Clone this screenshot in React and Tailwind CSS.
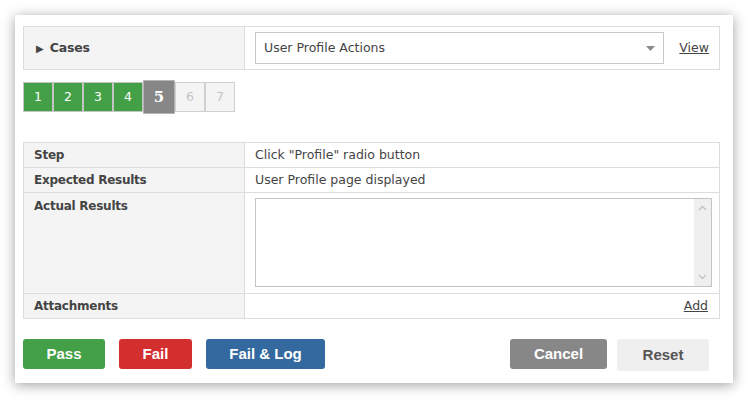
import { useState } from "react";

const steps = [1, 2, 3, 4, 5, 6, 7];

function StepBox({ n, current, done }) {
  if (n === current) {
    return (
      <div className="flex h-[34px] w-[32px] items-center justify-center border border-[#b5b5b5] bg-[#878787] font-['DejaVu_Serif',serif] text-[15px] font-bold text-white">
        {n}
      </div>
    );
  }
  if (done) {
    return (
      <div className="flex h-[30px] w-[30px] items-center justify-center border border-[#c4c4c4] bg-[#43a047] text-[12.5px] text-white">
        {n}
      </div>
    );
  }
  return (
    <div className="flex h-[30px] w-[30px] items-center justify-center border border-[#d0d0d0] bg-[#f4f4f4] text-[12.5px] text-[#c4c4c4]">
      {n}
    </div>
  );
}

export default function App() {
  const [current] = useState(5);
  const [actual, setActual] = useState("");

  return (
    <div className="min-h-screen bg-white p-[15px] font-['DejaVu_Sans',sans-serif] text-[12.5px] text-[#444]">
      {/* card */}
      <div className="h-[368px] w-[718px] bg-white pl-[8px] pt-[11px] shadow-[0_2px_12px_rgba(0,0,0,0.38)]">
        {/* cases row */}
        <div className="grid w-[697px] grid-cols-[221px_1fr] border border-[#ddd]">
          <div className="flex h-[42px] items-center gap-[6px] border-r border-[#ddd] bg-[#f4f4f4] pl-[12px] font-bold">
            <span className="text-[10px]">▶</span>
            <span className="text-[12.5px] tracking-[-0.2px]">Cases</span>
          </div>
          <div className="flex items-center pl-[10px] pr-[10px]">
            <div className="flex h-[32px] w-[409px] items-center justify-between border border-[#c8c8c8] bg-white pl-[8px] pr-[8px]">
              <span>User Profile Actions</span>
              <svg width="9" height="5" viewBox="0 0 9 5">
                <path d="M0 0 L9 0 L4.5 5 Z" fill="#8a8a8a" />
              </svg>
            </div>
            <a href="#" className="ml-auto text-[#444] underline">
              View
            </a>
          </div>
        </div>

        {/* step pager */}
        <div className="mt-[10px] flex h-[34px] items-center">
          {steps.map((n) => (
            <StepBox key={n} n={n} current={current} done={n < current} />
          ))}
        </div>

        {/* step details */}
        <div className="mt-[28px] grid w-[697px] grid-cols-[221px_1fr] border border-[#ddd]">
          <div className="flex h-[25px] items-center border-b border-r border-[#ddd] bg-[#f4f4f4] pl-[10px] text-[12px] font-bold tracking-[-0.25px]">
            Step
          </div>
          <div className="flex items-center border-b border-[#ddd] pl-[10px]">
            Click "Profile" radio button
          </div>

          <div className="flex h-[25px] items-center border-b border-r border-[#ddd] bg-[#f4f4f4] pl-[10px] text-[12px] font-bold tracking-[-0.25px]">
            Expected Results
          </div>
          <div className="flex items-center border-b border-[#ddd] pl-[10px]">
            User Profile page displayed
          </div>

          <div className="h-[101px] border-b border-r border-[#ddd] bg-[#f4f4f4] pl-[10px] pt-[4px] text-[12px] font-bold tracking-[-0.25px]">
            Actual Results
          </div>
          <div className="border-b border-[#ddd] pl-[10px] pt-[5px]">
            <div className="flex h-[89px] w-[457px] border border-[#c4c4c4] bg-white">
              <textarea
                value={actual}
                onChange={(e) => setActual(e.target.value)}
                className="h-full flex-1 resize-none p-[4px] outline-none"
              />
              <div className="flex w-[17px] flex-col items-center justify-between bg-[#efefef] py-[6px]">
                <svg width="9" height="6" viewBox="0 0 9 6">
                  <path d="M1 5 L4.5 1.5 L8 5" stroke="#c2c2c2" strokeWidth="1.3" fill="none" />
                </svg>
                <svg width="9" height="6" viewBox="0 0 9 6">
                  <path d="M1 1 L4.5 4.5 L8 1" stroke="#c2c2c2" strokeWidth="1.3" fill="none" />
                </svg>
              </div>
            </div>
          </div>

          <div className="flex h-[24px] items-center border-r border-[#ddd] bg-[#f4f4f4] pl-[10px] text-[12px] font-bold tracking-[-0.25px]">
            Attachments
          </div>
          <div className="flex items-center justify-end pr-[11px]">
            <a href="#" className="text-[#444] underline">
              Add
            </a>
          </div>
        </div>

        {/* actions */}
        <div className="mt-[20px] flex w-[697px] items-start font-['Liberation_Sans',Arial,sans-serif] text-[15px] font-bold">
          <button className="h-[30px] w-[82px] rounded-[3px] bg-[#43a047] text-white">
            Pass
          </button>
          <button className="ml-[14px] h-[30px] w-[73px] rounded-[3px] bg-[#d32f2f] text-white">
            Fail
          </button>
          <button className="ml-[14px] h-[30px] w-[119px] rounded-[3px] bg-[#33699f] text-white">
            Fail &amp; Log
          </button>
          <button className="ml-auto h-[30px] w-[97px] rounded-[3px] bg-[#878787] text-white">
            Cancel
          </button>
          <button className="ml-[10px] mr-[11px] h-[32px] w-[92px] rounded-[3px] bg-[#efefef] text-[#555]">
            Reset
          </button>
        </div>
      </div>
    </div>
  );
}
